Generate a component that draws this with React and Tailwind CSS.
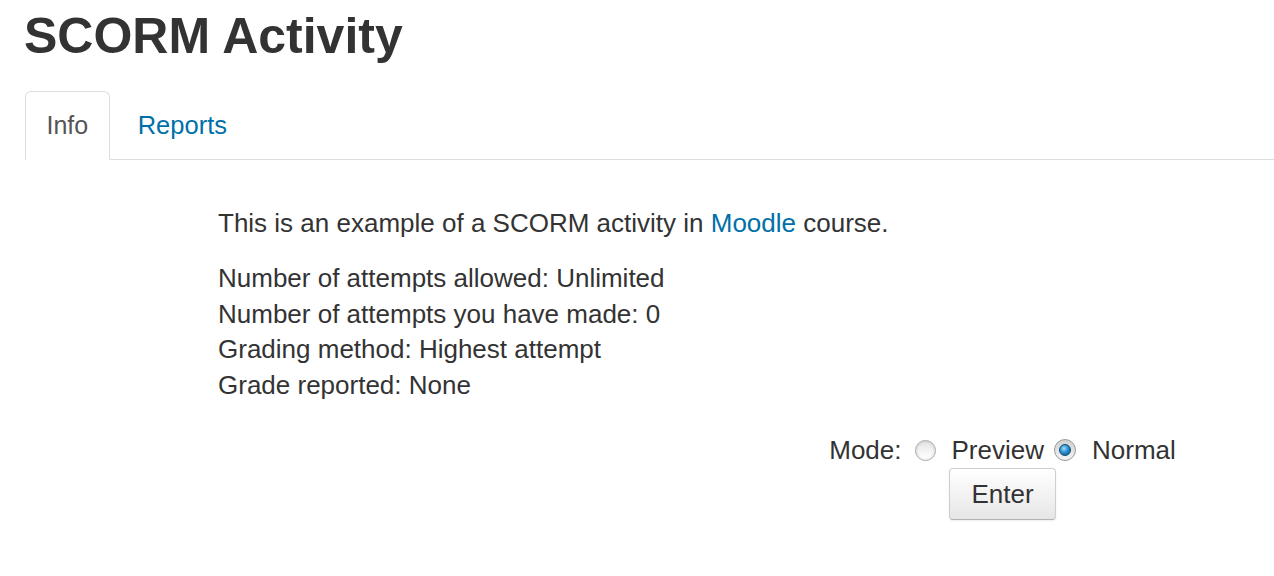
export default function App() {
  const font = { fontFamily: '"Liberation Sans", Arial, sans-serif' };
  return (
    <div className="w-[1274px] h-[576px] bg-white text-[#333] overflow-hidden" style={font}>
      <h1 className="pl-[24px] pt-[9px] text-[50px] leading-[55px] font-bold text-[#333]">SCORM Activity</h1>

      <div className="mt-[27px] ml-[25px] flex items-end border-b border-[#dddddd] h-[69px]">
        <div className="h-[69px] -mb-px flex items-center px-[20.5px] border border-[#dddddd] border-b-white bg-white rounded-t-[6px] text-[25px] text-[#555]">
          Info
        </div>
        <div className="h-[68px] flex items-center ml-[8px] px-[20px] text-[25.5px] text-[#0070a8]">
          Reports
        </div>
      </div>

      <div className="pl-[218px] pt-[46px] text-[26px] leading-[35px]">
        <p>
          This is an example of a SCORM activity in <span className="text-[#0070a8]">Moodle</span> course.
        </p>
        <div className="mt-[20px] leading-[35.5px]">
          <div>Number of attempts allowed: Unlimited</div>
          <div>Number of attempts you have made: 0</div>
          <div>Grading method: Highest attempt</div>
          <div>Grade reported: None</div>
        </div>

        <div className="mt-[29px] ml-[612px] w-[345px] flex flex-col items-center">
          <div className="flex items-center h-[36px] whitespace-nowrap">
            <span>Mode:</span>
            <span className="ml-[13px] mr-[16px] w-[21px] h-[21px] rounded-full border border-[#a8a8a8] bg-gradient-to-b from-[#d9d9d9] to-[#f8f8f8] flex items-center justify-center">
              <span className="w-[15px] h-[15px] rounded-full bg-gradient-to-b from-[#e6e6e6] to-[#ffffff]" />
            </span>
            <span>Preview</span>
            <span className="ml-[10px] mr-[16px] w-[22px] h-[22px] rounded-full border border-[#9a9a9a] bg-gradient-to-b from-[#d0d0d0] to-[#f4f4f4] flex items-center justify-center">
              <span className="w-[12px] h-[12px] rounded-full border border-[#0a4f75] bg-[radial-gradient(circle_at_40%_35%,#9fdcff_0%,#2b8fd0_45%,#0b4f80_100%)]" />
            </span>
            <span>Normal</span>
          </div>
          <button className="mt-[0px] w-[107px] h-[52px] rounded-[4px] border border-[#cfcfcf] border-b-[#b3b3b3] bg-gradient-to-b from-white to-[#e6e6e6] shadow-[0_1px_2px_rgba(0,0,0,0.08)] text-[26px] text-[#333]">
            Enter
          </button>
        </div>
      </div>
    </div>
  );
}
